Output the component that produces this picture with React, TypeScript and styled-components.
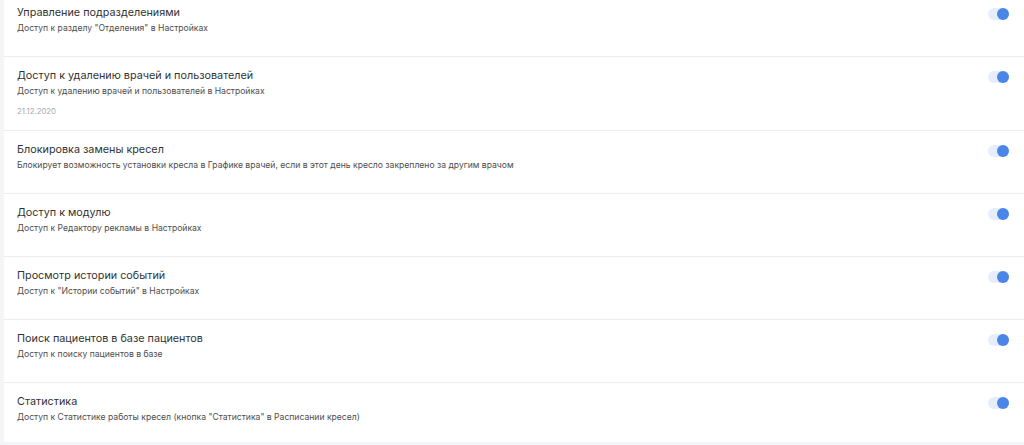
import { createGlobalStyle, styled } from "styled-components";

const GlobalStyle = createGlobalStyle`
    html, body {
        margin: 0;
        padding: 0;
        background: #f4f5f7;
        font-family: Inter, "Noto Sans", sans-serif;
        overflow: hidden;
    }
`;

const Page = styled.div`
    height: 445px;
    padding-left: 4px;
    box-sizing: border-box;
    overflow: hidden;
`;

const List = styled.div`
    background: #ffffff;
    margin-top: -6px;
    height: 448px;
`;

const Row = styled.div`
    display: flex;
    flex-direction: row;
    justify-content: space-between;
    align-items: flex-start;
    padding: 11px 15px 12px 13px;
    min-height: 39px;
    border-bottom: 1px solid #ececec;
`;

const Info = styled.div`
    display: flex;
    flex-direction: column;
`;

const Title = styled.div`
    font-size: 10.8px;
    line-height: 16px;
    color: #333333;
`;

const Description = styled.div`
    font-size: 8.6px;
    line-height: 14px;
    color: #4d4d4d;
`;

const DateLabel = styled.div`
    margin-top: 6px;
    font-size: 7.8px;
    line-height: 14px;
    color: #a9a9a9;
`;

const Track = styled.div<{ checked: boolean }>`
    position: relative;
    flex-shrink: 0;
    width: 21px;
    height: 12px;
    margin-top: 3px;
    border-radius: 6px;
    background: ${props => props.checked ? "#e6edfb" : "#e4e4e4"};
`;

const Knob = styled.div<{ checked: boolean }>`
    position: absolute;
    top: 0;
    left: ${props => props.checked ? "9px" : "0"};
    width: 12px;
    height: 12px;
    border-radius: 50%;
    background: ${props => props.checked ? "#4a86e8" : "#ffffff"};
`;

const permissions = [
    { title: "Управление подразделениями", text: "Доступ к разделу \"Отделения\" в Настройках" },
    { title: "Доступ к удалению врачей и пользователей", text: "Доступ к удалению врачей и пользователей в Настройках", date: "21.12.2020" },
    { title: "Блокировка замены кресел", text: "Блокирует возможность установки кресла в Графике врачей, если в этот день кресло закреплено за другим врачом" },
    { title: "Доступ к модулю", text: "Доступ к Редактору рекламы в Настройках" },
    { title: "Просмотр истории событий", text: "Доступ к \"Истории событий\" в Настройках" },
    { title: "Поиск пациентов в базе пациентов", text: "Доступ к поиску пациентов в базе" },
    { title: "Статистика", text: "Доступ к Статистике работы кресел (кнопка \"Статистика\" в Расписании кресел)" },
];

const App = () => {
    return <>
        <GlobalStyle />
        <Page>
            <List>
                {permissions.map(item =>
                    <Row key={item.title}>
                        <Info>
                            <Title>{item.title}</Title>
                            <Description>{item.text}</Description>
                            {item.date && <DateLabel>{item.date}</DateLabel>}
                        </Info>
                        <Track checked={true}><Knob checked={true} /></Track>
                    </Row>
                )}
            </List>
        </Page>
    </>
}

export default App;
